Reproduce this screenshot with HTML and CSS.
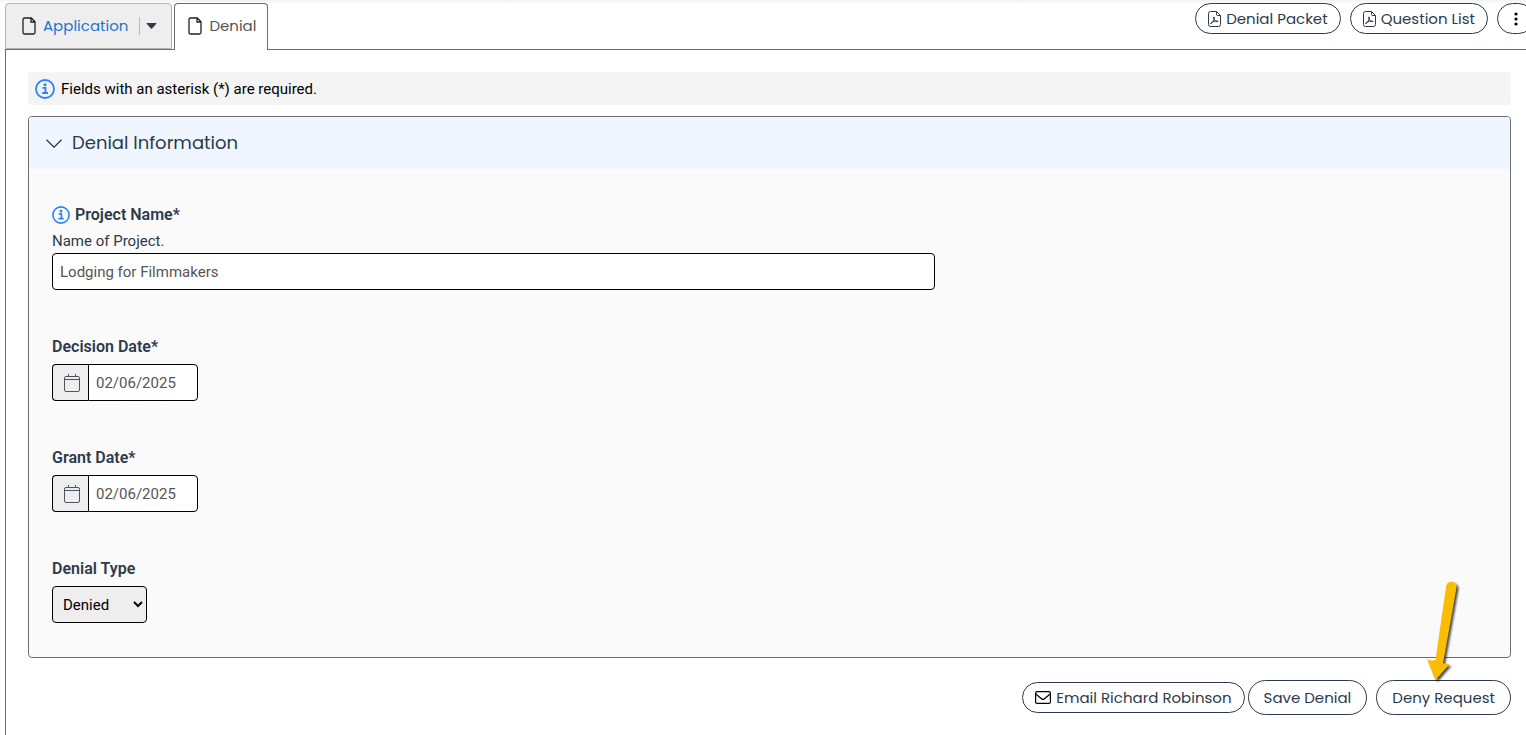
FILE: index.html
```html
<!DOCTYPE html>
<html lang="en">
<head>
    <meta charset="UTF-8">
    <meta name="viewport" content="width=device-width, initial-scale=1.0">
    <title>Denial</title>
    <link rel="stylesheet" href="styles.css">
</head>
<body>
    <header class="topbar">
        <nav class="tabs">
            <div class="tab">
                <a href="#application" class="tab-link">
                    <svg class="icon-file" viewBox="0 0 14 18"><path d="M2.5 1h6.8L13 4.8v10.7a1.5 1.5 0 0 1-1.5 1.5h-9A1.5 1.5 0 0 1 1 15.5v-13A1.5 1.5 0 0 1 2.5 1zM9 1v4h4"/></svg>
                    Application
                </a>
                <button type="button" class="tab-toggle" aria-label="Application menu">
                    <svg class="icon-caret" viewBox="0 0 10 6"><path d="M.5 0h9c.5 0 .6.5.3.8L5.600 5.500a.8.8 0 0 1-1.200 0L.2.800C-.1.500 0 0 .5 0z"/></svg>
                </button>
            </div>
            <div class="tab active">
                <a href="#denial" class="tab-link">
                    <svg class="icon-file" viewBox="0 0 14 18"><path d="M2.5 1h6.8L13 4.8v10.7a1.5 1.5 0 0 1-1.5 1.5h-9A1.5 1.5 0 0 1 1 15.5v-13A1.5 1.5 0 0 1 2.5 1zM9 1v4h4"/></svg>
                    Denial
                </a>
            </div>
        </nav>
        <div class="actions">
            <button type="button" class="btn">
                <svg class="icon-pdf" viewBox="0 0 13 16"><path d="M2.5.5h6l4 4v9a2 2 0 0 1-2 2h-8a2 2 0 0 1-2-2v-11a2 2 0 0 1 2-2zM8.500.5v3a1 1 0 0 0 1 1h3"/><path d="M3 12.700c1.600-1 3.200-4.200 3.400-6.200.1-.9-.9-.9-.8 0 .3 2 2 4 3.600 4.300 1.100.2 1-.9 0-.9-2 0-4.300.7-6 1.800-.8.600-.8 1.200-.2 1z"/></svg>
                Denial Packet
            </button>
            <button type="button" class="btn">
                <svg class="icon-pdf" viewBox="0 0 13 16"><path d="M2.5.5h6l4 4v9a2 2 0 0 1-2 2h-8a2 2 0 0 1-2-2v-11a2 2 0 0 1 2-2zM8.500.5v3a1 1 0 0 0 1 1h3"/><path d="M3 12.700c1.600-1 3.200-4.200 3.400-6.200.1-.9-.9-.9-.8 0 .3 2 2 4 3.600 4.300 1.100.2 1-.9 0-.9-2 0-4.300.7-6 1.800-.8.600-.8 1.200-.2 1z"/></svg>
                Question List
            </button>
            <button type="button" class="btn btn-more" aria-label="More">
                <svg class="icon-dots" viewBox="0 0 4 14"><circle cx="2" cy="2" r="1.600"/><circle cx="2" cy="7" r="1.600"/><circle cx="2" cy="12" r="1.600"/></svg>
            </button>
        </div>
    </header>

    <main class="page">
        <div class="notice">
            <svg class="icon-info" viewBox="0 0 20 20"><circle cx="10" cy="10" r="9"/><path d="M7.500 8.800h3V14M7.200 14h5.800"/><circle class="dot" cx="10" cy="5.700" r="1.500"/></svg>
            Fields with an asterisk (*) are required.
        </div>

        <section class="panel">
            <h2 class="panel-header">
                <svg class="icon-chevron" viewBox="0 0 16 9"><path d="M.5.8L8 8.200 15.500.8"/></svg>
                Denial Information
            </h2>
            <form class="panel-body" id="denialForm">
                <div class="field">
                    <label for="projectName">
                        <svg class="icon-info small" viewBox="0 0 20 20"><circle cx="10" cy="10" r="9"/><path d="M7.500 8.800h3V14M7.200 14h5.800"/><circle class="dot" cx="10" cy="5.700" r="1.500"/></svg>
                        Project Name*
                    </label>
                    <p class="help" id="projectHelp">Name of Project.</p>
                    <input type="text" id="projectName" class="input" value="Lodging for Filmmakers" aria-describedby="projectHelp">
                </div>
                <div class="field">
                    <label for="decisionDate">Decision Date*</label>
                    <div class="date">
                        <button type="button" class="date-btn" aria-label="Pick decision date">
                            <svg class="icon-cal" viewBox="0 0 16 18"><path d="M2 2.500h12A1.500 1.500 0 0 1 15.500 4v12a1.500 1.500 0 0 1-1.500 1.500H2A1.500 1.500 0 0 1 .5 16V4A1.500 1.500 0 0 1 2 2.500zM.5 5.500h15M4.500 0v2.500M11.500 0v2.500"/></svg>
                        </button>
                        <input type="text" id="decisionDate" class="input" value="02/06/2025">
                    </div>
                </div>
                <div class="field">
                    <label for="grantDate">Grant Date*</label>
                    <div class="date">
                        <button type="button" class="date-btn" aria-label="Pick grant date">
                            <svg class="icon-cal" viewBox="0 0 16 18"><path d="M2 2.500h12A1.500 1.500 0 0 1 15.500 4v12a1.500 1.500 0 0 1-1.500 1.500H2A1.500 1.500 0 0 1 .5 16V4A1.500 1.500 0 0 1 2 2.500zM.5 5.500h15M4.500 0v2.500M11.500 0v2.500"/></svg>
                        </button>
                        <input type="text" id="grantDate" class="input" value="02/06/2025">
                    </div>
                </div>
                <div class="field">
                    <label for="denialType">Denial Type</label>
                    <select id="denialType" class="select">
                        <option>Denied</option>
                    </select>
                </div>
            </form>
        </section>

        <footer class="footer">
            <button type="button" class="btn">
                <svg class="icon-mail" viewBox="0 0 16 13"><rect x=".6" y=".6" width="14.800" height="11.800" rx="1.500"/><path d="M.8 3l5.700 4.700c.9.800 2.100.8 3 0L15.200 3"/></svg>
                Email Richard Robinson
            </button>
            <button type="submit" form="denialForm" class="btn btn-lg">Save Denial</button>
            <div class="deny">
                <button type="button" class="btn btn-lg">Deny Request</button>
                <svg class="arrow" viewBox="0 0 40 108"><path d="M23 9C24 1 34.500 3 33.500 9.500L20 85.500l6.500.5-14 16L4 81q4.500 3 8.500 1z"/></svg>
            </div>
        </footer>
    </main>
</body>
</html>
```
FILE: styles.css
```css
* {
    box-sizing: border-box;
}
body {
    margin: 0;
    min-height: 100vh;
    display: flex;
    flex-direction: column;
    padding-left: 5px;
    background: linear-gradient(#f2f2f2, #fff 4px);
    color: #2c3a4b;
    font-family: Roboto, sans-serif;
    font-size: 15px;
    line-height: 18px;
    overflow-x: hidden;
}
svg {
    flex: none;
    fill: none;
    stroke: currentColor;
}

/* tabs and top buttons */
.topbar {
    display: flex;
    justify-content: space-between;
    height: 50px;
    padding-top: 3px;
    border-bottom: 1px solid #6c6c6c;
}
.tabs {
    display: flex;
    gap: 2px;
}
.tab {
    display: flex;
    align-items: center;
    height: 46px;
    padding: 0 10px 0 16px;
    background: #eee;
    border: 1px solid #b5b5b5;
    border-radius: 4px 4px 0 0;
    font-family: Poppins, Inter, sans-serif;
}
.tab.active {
    height: 47px;
    padding: 0 11px 2px 13px;
    background: #fff;
    border-color: #6c6c6c;
    border-bottom: 0;
}
.tab-link {
    display: flex;
    align-items: center;
    gap: 7px;
    color: #1976d2;
    text-decoration: none;
}
.active .tab-link {
    color: #555;
}
.tab-toggle {
    display: flex;
    align-items: center;
    height: 18px;
    margin-left: 11px;
    padding: 0 4px 0 6px;
    background: none;
    border: 0;
    border-left: 1px solid #bbb;
    color: #2c3a4b;
}
.icon-file {
    width: 14px;
    height: 18px;
    color: #222;
    stroke-width: 1.3;
}
.icon-caret {
    width: 11px;
    height: 6px;
    fill: currentColor;
    stroke: none;
}
.actions {
    display: flex;
    gap: 9px;
    margin-right: -8px;
}
.btn {
    display: flex;
    align-items: center;
    justify-content: center;
    gap: 5px;
    height: 31px;
    padding: 0 12px;
    background: #fff;
    border: 1px solid #2c3a4b;
    border-radius: 18px;
    color: #2c3a4b;
    font-family: Poppins, Inter, sans-serif;
    font-size: 15px;
    white-space: nowrap;
    cursor: pointer;
}
.btn-lg {
    height: 35px;
    padding: 0 15px;
}
.btn-more {
    width: 37px;
}
.icon-pdf {
    width: 13px;
    height: 16px;
}
.icon-dots {
    width: 4px;
    height: 14px;
    fill: #000;
    stroke: none;
}

.page {
    flex: 1;
    padding: 22px 15px 20px 22px;
    border-left: 1px solid #6c6c6c;
    background: #fff;
}
.notice {
    display: flex;
    align-items: center;
    gap: 6px;
    height: 33px;
    padding: 0 7px;
    margin-bottom: 11px;
    background: #f4f4f4;
    border-radius: 4px;
    color: #000;
}
.icon-info {
    width: 20px;
    height: 20px;
    color: #2684ff;
    stroke-width: 1.8;
}
.icon-info.small {
    width: 18px;
    height: 18px;
}
.icon-info .dot {
    fill: currentColor;
    stroke: none;
}

/* panel */
.panel {
    border: 1px solid #6c6c6c;
    border-radius: 4px;
    background: #fafafa;
    overflow: hidden;
}
.panel-header {
    display: flex;
    align-items: center;
    gap: 10px;
    height: 52px;
    margin: 0;
    padding: 0 17px;
    background: #eff6ff;
    font-family: Poppins, Inter, sans-serif;
    font-size: 18px;
    font-weight: 400;
}
.icon-chevron {
    width: 16px;
    height: 9px;
    stroke-width: 1.3;
}
.panel-body {
    display: flex;
    flex-direction: column;
    gap: 48px;
    padding: 37px 23px 34px;
}
.field label {
    display: flex;
    align-items: center;
    gap: 5px;
    margin-bottom: 8px;
    font-size: 16px;
    font-weight: 600;
}
.help {
    margin: 0 0 3px;
}
.input {
    display: block;
    width: 100%;
    max-width: 883px;
    height: 37px;
    padding: 0 7px;
    background: #fff;
    border: 1px solid #000;
    border-radius: 4px;
    color: #555;
    font: inherit;
}
.date {
    display: flex;
    width: 146px;
}
.date .input {
    border-radius: 0 4px 4px 0;
}
.date-btn {
    display: flex;
    align-items: center;
    justify-content: center;
    flex: none;
    width: 36px;
    padding: 0 0 0 3px;
    background: #eee;
    border: 1px solid #000;
    border-right: 0;
    border-radius: 4px 0 0 4px;
    color: #4b5663;
}
.icon-cal {
    width: 16px;
    height: 18px;
}
.select {
    display: block;
    width: 95px;
    height: 37px;
    padding: 0 2px 0 6px;
    background: #eee;
    border: 1px solid #000;
    border-radius: 4px;
    color: #000;
    font: inherit;
}

.footer {
    display: flex;
    align-items: center;
    justify-content: flex-end;
    gap: 3px;
    margin-top: 22px;
}
.icon-mail {
    width: 16px;
    height: 13px;
    color: #000;
    stroke-width: 1.2;
}
.deny {
    position: relative;
    margin-left: 6px;
}
.arrow {
    position: absolute;
    right: 48px;
    bottom: 29px;
    width: 40px;
    height: 108px;
    fill: #fbbc04;
    stroke: none;
    filter: drop-shadow(2px 2px 1px rgba(0, 0, 0, 0.7));
    pointer-events: none;
}
```
